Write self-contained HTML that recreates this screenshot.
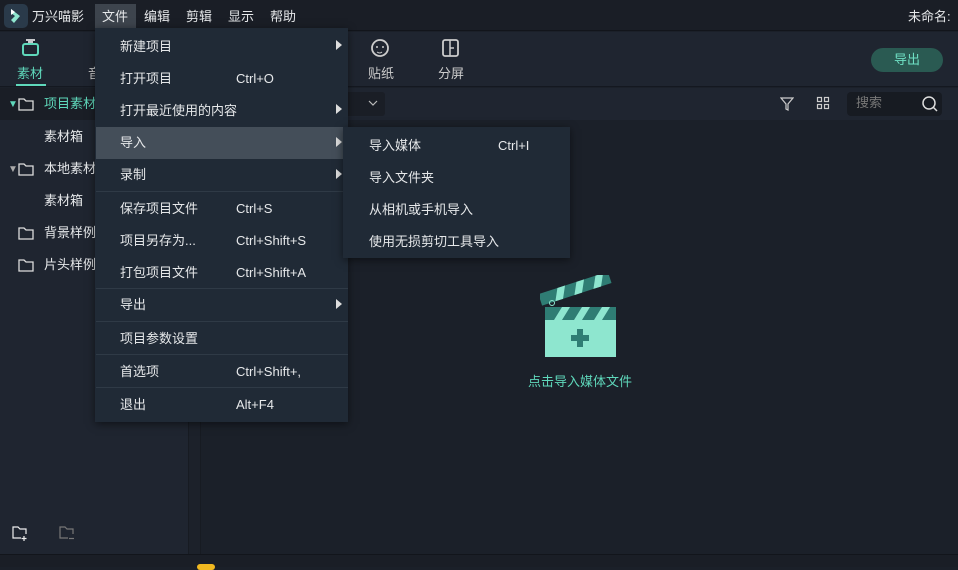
<!DOCTYPE html>
<html><head><meta charset="utf-8"><style>
*{margin:0;padding:0;box-sizing:border-box}
body{width:958px;height:567px;overflow:hidden;background:#1b2029;font-family:"Liberation Sans","Noto Sans CJK SC",sans-serif;font-size:13px;color:#e6e8ea;position:relative}
.a{position:absolute}
.t{white-space:nowrap;line-height:16px}
</style></head><body>
<!-- title bar -->
<div class="a" style="left:0;top:0;width:958px;height:31px;background:#1a1e26;border-bottom:1px solid #12151b"></div>
<div class="a" style="left:4px;top:4px;width:24px;height:24px;background:#2a3a4a;border-radius:5px"></div>
<svg class="a" style="left:6px;top:6px" width="20" height="20"><path d="M5 3 L14 10 L8 17 L5 14 L9 10 L5 7Z" fill="#8fe6cf"/><path d="M5 3 L9 6 L5 9Z" fill="#fff"/></svg>
<div class="a t" style="left:32px;top:9px">万兴喵影</div>
<div class="a" style="left:95px;top:4px;width:41px;height:27px;background:#3d444d"></div>
<div class="a t" style="left:102px;top:9px">文件</div>
<div class="a t" style="left:144px;top:9px">编辑</div>
<div class="a t" style="left:186px;top:9px">剪辑</div>
<div class="a t" style="left:228px;top:9px">显示</div>
<div class="a t" style="left:270px;top:9px">帮助</div>
<div class="a t" style="left:908px;top:9px">未命名:</div>
<!-- toolbar -->
<div class="a" style="left:0;top:32px;width:958px;height:55px;background:#1f2530;border-bottom:1px solid #141820"></div>
<svg class="a" style="left:20px;top:37px" width="22" height="20"><rect x="3" y="7" width="15" height="11" rx="2" fill="none" stroke="#5fd8bb" stroke-width="2"/><path d="M6 3h9M8 5h5" stroke="#fff" stroke-width="1.5"/></svg>
<div class="a t" style="left:17px;top:66px;color:#5fd8bb">素材</div>
<div class="a" style="left:16px;top:84px;width:30px;height:2px;background:#5fd8bb"></div>
<div class="a t" style="left:88px;top:66px;color:#ccc">音</div>
<svg class="a" style="left:369px;top:37px" width="22" height="22"><circle cx="11" cy="11" r="8" fill="none" stroke="#ccc" stroke-width="1.8"/><circle cx="8" cy="10" r="1" fill="#ccc"/><circle cx="14" cy="10" r="1" fill="#ccc"/><path d="M8 15q3 2 5 0" stroke="#ccc" fill="none"/></svg>
<div class="a t" style="left:368px;top:66px;color:#ccc">贴纸</div>
<svg class="a" style="left:440px;top:37px" width="22" height="22"><rect x="3" y="3" width="15" height="16" rx="2" fill="none" stroke="#ccc" stroke-width="1.8"/><path d="M10 3v16M10 11h4" stroke="#ccc" stroke-width="1.5"/></svg>
<div class="a t" style="left:438px;top:66px;color:#ccc">分屏</div>
<div class="a" style="left:871px;top:48px;width:72px;height:24px;border-radius:12px;background:#2a5a52;color:#6fe0c4;text-align:center;line-height:24px">导出</div>
<!-- left panel -->
<div class="a" style="left:0;top:88px;width:188px;height:466px;background:#1f2530"></div>
<div class="a" style="left:188px;top:88px;width:13px;height:466px;background:#1c212a;border-left:1px solid #171b22;border-right:1px solid #171b22"></div>
<div class="a" style="left:0;top:88px;width:188px;height:32px;background:#1a1e26"></div>
<div class="a t" style="left:8px;top:97px;color:#5fd8bb;font-size:10px">▼</div>
<svg class="a" style="left:18px;top:97px" width="16" height="14"><path d="M1 2h5l2 2h7v9H1z" fill="none" stroke="#ddd" stroke-width="1.3"/></svg>
<div class="a t" style="left:44px;top:96px;color:#5fd8bb">项目素材</div>
<div class="a t" style="left:44px;top:129px">素材箱</div>
<div class="a t" style="left:8px;top:162px;color:#aaa;font-size:10px">▼</div>
<svg class="a" style="left:18px;top:162px" width="16" height="14"><path d="M1 2h5l2 2h7v9H1z" fill="none" stroke="#ddd" stroke-width="1.3"/></svg>
<div class="a t" style="left:44px;top:161px">本地素材</div>
<div class="a t" style="left:44px;top:193px">素材箱</div>
<svg class="a" style="left:18px;top:226px" width="16" height="14"><path d="M1 2h5l2 2h7v9H1z" fill="none" stroke="#ddd" stroke-width="1.3"/></svg>
<div class="a t" style="left:44px;top:225px">背景样例</div>
<svg class="a" style="left:18px;top:258px" width="16" height="14"><path d="M1 2h5l2 2h7v9H1z" fill="none" stroke="#ddd" stroke-width="1.3"/></svg>
<div class="a t" style="left:44px;top:257px">片头样例</div>
<svg class="a" style="left:12px;top:526px" width="18" height="16"><path d="M9 12H1V1h5l2 2h6v5" fill="none" stroke="#eee" stroke-width="1.2"/><path d="M12 10v5M9.5 12.5h5" stroke="#eee" stroke-width="1.2"/></svg>
<svg class="a" style="left:59px;top:526px" width="18" height="16"><path d="M9 12H1V1h5l2 2h6v5" fill="none" stroke="#777" stroke-width="1.2"/><path d="M10 12.5h5" stroke="#777" stroke-width="1.2"/></svg>
<!-- main -->
<div class="a" style="left:201px;top:88px;width:757px;height:32px;background:#1f2530"></div>
<div class="a" style="left:201px;top:120px;width:757px;height:434px;background:#1b2029"></div>
<div class="a" style="left:340px;top:92px;width:45px;height:24px;background:#1a1e26;border-radius:3px"></div>
<svg class="a" style="left:368px;top:100px" width="10" height="6"><path d="M1 1l4 4 4-4" fill="none" stroke="#bbb" stroke-width="1.2"/></svg>
<svg class="a" style="left:780px;top:96px" width="14" height="16"><path d="M1 2h12l-5 6v6l-2-1V8z" fill="none" stroke="#ccc" stroke-width="1.2"/></svg>
<svg class="a" style="left:816px;top:96px" width="14" height="14"><g fill="none" stroke="#ccc" stroke-width="1.2"><rect x="1.5" y="1.5" width="4" height="4"/><rect x="8.5" y="1.5" width="4" height="4"/><rect x="1.5" y="8.5" width="4" height="4"/><rect x="8.5" y="8.5" width="4" height="4"/></g></svg>
<div class="a" style="left:847px;top:92px;width:95px;height:24px;background:#171b22;border-radius:4px"></div>
<div class="a t" style="left:856px;top:95px;color:#777">搜索</div>
<svg class="a" style="left:921px;top:95px" width="18" height="18"><circle cx="8" cy="8" r="6" fill="none" stroke="#ddd" stroke-width="1.5"/><path d="M12 12l4 4" stroke="#ddd" stroke-width="1.5"/></svg>
<!-- clapper -->
<svg class="a" style="left:540px;top:275px" width="80" height="85">
<rect x="5" y="32" width="71" height="50" fill="#8ee6cf"/>
<rect x="5" y="32" width="71" height="13" fill="#2f7d74"/>
<path d="M14 45l8-13h8l-8 13zM34 45l8-13h8l-8 13zM54 45l8-13h8l-8 13z" fill="#8ee6cf"/>
<g transform="rotate(-18 4 30)"><rect x="2" y="18" width="73" height="12" fill="#2f7d74"/><path d="M16 30l6-12h8l-6 12zM36 30l6-12h8l-6 12zM56 30l6-12h8l-6 12z" fill="#8ee6cf"/></g>
<circle cx="12" cy="28" r="2.5" fill="none" stroke="#8ee6cf"/>
<path d="M40 54v18M31 63h18" stroke="#2f7d74" stroke-width="6"/>
</svg>
<div class="a t" style="left:528px;top:374px;color:#5fd8bb">点击导入媒体文件</div>
<!-- bottom -->
<div class="a" style="left:0;top:554px;width:958px;height:13px;background:#1a1e26;border-top:1px solid #12151b"></div>
<div class="a" style="left:197px;top:564px;width:18px;height:6px;border-radius:4px;background:#f0b820"></div>
<!-- file menu -->
<div class="a" style="left:95px;top:28px;width:253px;height:394px;background:#202a36;box-shadow:0 2px 8px rgba(0,0,0,.5)"></div>
<div class="a" style="left:96px;top:127px;width:248px;height:32px;background:#444e59"></div>
<div class="a" style="left:96px;top:191px;width:252px;height:1px;background:#2f3a46"></div>
<div class="a" style="left:96px;top:288px;width:252px;height:1px;background:#2f3a46"></div>
<div class="a" style="left:96px;top:321px;width:252px;height:1px;background:#2f3a46"></div>
<div class="a" style="left:96px;top:354px;width:252px;height:1px;background:#2f3a46"></div>
<div class="a" style="left:96px;top:387px;width:252px;height:1px;background:#2f3a46"></div>
<div class="a t" style="left:120px;top:39px">新建项目</div>
<div class="a t" style="left:120px;top:71px">打开项目</div><div class="a t" style="left:236px;top:71px">Ctrl+O</div>
<div class="a t" style="left:120px;top:103px">打开最近使用的内容</div>
<div class="a t" style="left:120px;top:135px">导入</div>
<div class="a t" style="left:120px;top:167px">录制</div>
<div class="a t" style="left:120px;top:201px">保存项目文件</div><div class="a t" style="left:236px;top:201px">Ctrl+S</div>
<div class="a t" style="left:120px;top:233px">项目另存为...</div><div class="a t" style="left:236px;top:233px">Ctrl+Shift+S</div>
<div class="a t" style="left:120px;top:265px">打包项目文件</div><div class="a t" style="left:236px;top:265px">Ctrl+Shift+A</div>
<div class="a t" style="left:120px;top:297px">导出</div>
<div class="a t" style="left:120px;top:331px">项目参数设置</div>
<div class="a t" style="left:120px;top:364px">首选项</div><div class="a t" style="left:236px;top:364px">Ctrl+Shift+,</div>
<div class="a t" style="left:120px;top:397px">退出</div><div class="a t" style="left:236px;top:397px">Alt+F4</div>
<svg class="a" style="left:335px;top:40px" width="8" height="10"><path d="M1 0l6 5-6 5z" fill="#ddd"/></svg>
<svg class="a" style="left:335px;top:104px" width="8" height="10"><path d="M1 0l6 5-6 5z" fill="#ddd"/></svg>
<svg class="a" style="left:335px;top:137px" width="8" height="10"><path d="M1 0l6 5-6 5z" fill="#ddd"/></svg>
<svg class="a" style="left:335px;top:169px" width="8" height="10"><path d="M1 0l6 5-6 5z" fill="#ddd"/></svg>
<svg class="a" style="left:335px;top:299px" width="8" height="10"><path d="M1 0l6 5-6 5z" fill="#ddd"/></svg>
<!-- submenu -->
<div class="a" style="left:343px;top:127px;width:227px;height:131px;background:#202a36;box-shadow:0 2px 8px rgba(0,0,0,.5)"></div>
<div class="a t" style="left:369px;top:138px">导入媒体</div><div class="a t" style="left:498px;top:138px">Ctrl+I</div>
<div class="a t" style="left:369px;top:170px">导入文件夹</div>
<div class="a t" style="left:369px;top:202px">从相机或手机导入</div>
<div class="a t" style="left:369px;top:234px">使用无损剪切工具导入</div>
</body></html>
